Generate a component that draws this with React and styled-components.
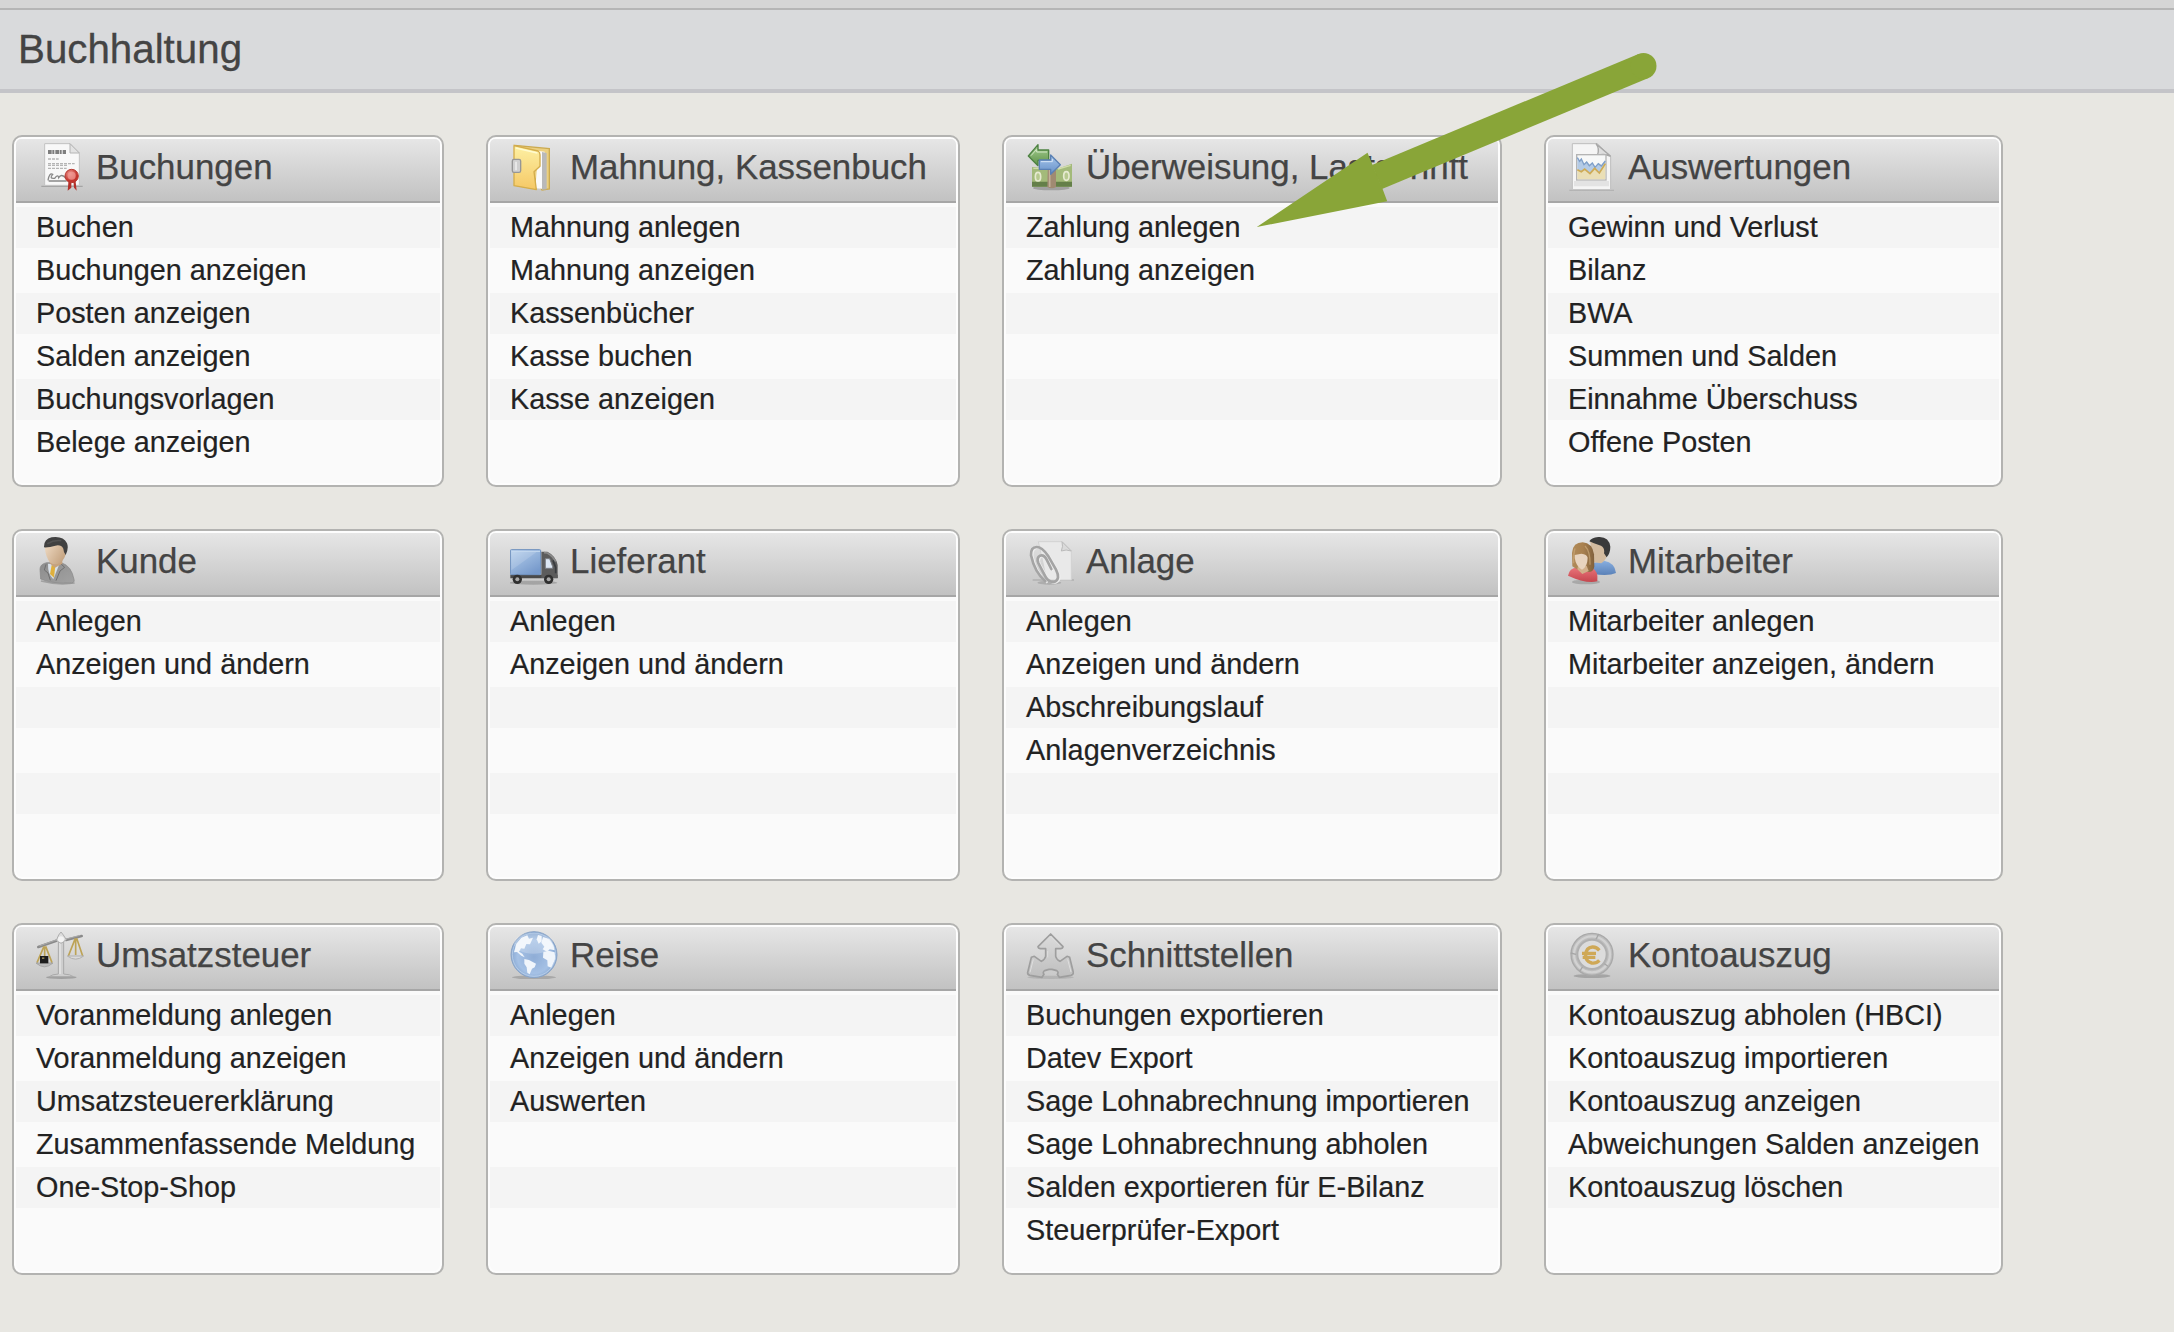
import React from "react";
import styled, { createGlobalStyle } from "styled-components";

const GlobalStyle = createGlobalStyle`
  *, *::before, *::after { box-sizing: border-box; }
  html, body, #root { margin: 0; padding: 0; height: 100%; }
  body {
    background: #e8e7e2;
    font-family: "Liberation Sans", Arial, Helvetica, sans-serif;
    overflow: hidden;
  }
`;

const Page = styled.div`
  position: relative;
  min-height: 1332px;
  display: flex;
  flex-direction: column;
`;

const TopStrip = styled.div`
  height: 10px;
  background: #d5d5d5;
  border-bottom: 2px solid #b5b5b5;
`;

const TitleBar = styled.header`
  height: 83px;
  padding: 1px 18px 0;
  background: #d9dadc;
  border-bottom: 4px solid #c4c4c8;
`;

const PageTitle = styled.h1`
  margin: 0;
  font-size: 40.3px;
  font-weight: 400;
  line-height: 78px;
  color: #444;
  -webkit-text-stroke: 0.3px #444;
`;

const CardGrid = styled.main`
  display: grid;
  grid-template-columns: 432px 474px 500px 459px;
  grid-auto-rows: 352px;
  gap: 42px;
  padding: 42px 12px;
`;

const Card = styled.section`
  padding: 2px;
  background: #fafafa;
  border: 2px solid #b3b3b1;
  border-radius: 10px;
  box-shadow: inset 0 0 0 2px #fdfdfd;
`;

const CardHeader = styled.div`
  display: flex;
  align-items: flex-start;
  gap: 12px;
  height: 64px;
  padding: 4px 20px 0;
  border-bottom: 2px solid #a6a6a6;
  border-radius: 5px 5px 0 0;
  background: linear-gradient(#e6e6e6, #c2c2c2);
`;

const CardTitle = styled.h2`
  margin: 0;
  font-size: 34.9px;
  font-weight: 400;
  line-height: 48px;
  white-space: nowrap;
  color: #444;
  -webkit-text-stroke: 0.25px #444;
`;

const IconSvg = styled.svg`
  flex: none;
  width: 48px;
  height: 48px;
  filter: blur(0.6px);
`;

const LinkList = styled.ul`
  list-style: none;
  margin: 4px 0 0;
  padding: 0;
`;

const LinkRow = styled.li`
  height: 43px;
  padding: 0 20px;
  border-bottom: 2px solid #fafafa;
  background: ${(p) => (p.$striped ? "#f4f4f4" : "#fafafa")};
  font-size: 28.8px;
  line-height: 40px;
  white-space: nowrap;
  color: #222;
  -webkit-text-stroke: 0.2px #222;
`;

const Pointer = styled.svg`
  position: absolute;
  left: 1250px;
  top: 45px;
  width: 415px;
  height: 190px;
  pointer-events: none;
`;

const Icon = ({ children }) => (
  <IconSvg viewBox="0 0 144 144" aria-hidden="true">{children}</IconSvg>
);

const CertificateIcon = () => (
  <Icon>
    <defs>
      <radialGradient id="seal" cx=".4" cy=".35">
        <stop offset="0" stopColor="#f4a49e" />
        <stop offset="1" stopColor="#c3342d" />
      </radialGradient>
    </defs>
    <path d="M16 130H140" stroke="#9b9b9b" strokeWidth="4" opacity=".8" />
    <path d="M26 2H102L130 30V127H26Z" fill="#f8f8f8" stroke="#c2c2c2" strokeWidth="3" />
    <path d="M102 2V30H130Z" fill="#e3e3e3" stroke="#b4b4b4" strokeWidth="3" />
    <path d="M36 24H90M36 30H90" stroke="#555" strokeWidth="5" strokeDasharray="11 2 6 3" />
    <path d="M36 48H68M36 62H116M36 67H94M36 76H92" stroke="#b5b5b5" strokeWidth="4" strokeDasharray="9 3" />
    <path d="M36 112Q40 88 50 94Q38 108 56 106Q66 92 68 104Q76 90 90 106M38 114H92" fill="none" stroke="#888" strokeWidth="4" />
    <path d="M98 108L95 143L106 134V114ZM112 112L114 134L122 143L118 108Z" fill="#b3312b" />
    <circle cx="107" cy="99" r="20" fill="url(#seal)" stroke="#b83a32" strokeWidth="3" />
    <circle cx="107" cy="98" r="12" fill="#ef9690" opacity=".75" />
  </Icon>
);

const FolderIcon = () => (
  <Icon>
    <defs>
      <linearGradient id="folder" x2="0" y2="1">
        <stop offset="0" stopColor="#fdf0a3" />
        <stop offset="1" stopColor="#f5c866" />
      </linearGradient>
    </defs>
    <path d="M14 7L118 17V138L96 141Z" fill="#ecd080" stroke="#cbaa50" strokeWidth="4" />
    <path d="M85 24L104 26V138L76 136Z" fill="#fafafa" />
    <path d="M96 27L110 30V139L96 140Z" fill="#b9b9b9" />
    <path d="M12 8L84 24Q90 27 90 35V70L72 86L79 140L12 128Z" fill="url(#folder)" stroke="#d4ad4b" strokeWidth="4" strokeLinejoin="round" />
    <path d="M17 15L82 30" stroke="#fffbd0" strokeWidth="4" />
    <rect x="7" y="49" width="25" height="39" rx="5" fill="#d0d0d0" stroke="#969696" strokeWidth="4" />
    <path d="M18 56V82" stroke="#f4f4f4" strokeWidth="4" />
  </Icon>
);

const TransferIcon = () => (
  <Icon>
    <defs>
      <linearGradient id="green" x2="0" y2="1">
        <stop offset="0" stopColor="#a9cf94" />
        <stop offset="1" stopColor="#5c9248" />
      </linearGradient>
      <linearGradient id="blueArrow" x2="0" y2="1">
        <stop offset="0" stopColor="#a5c5ea" />
        <stop offset="1" stopColor="#6690c8" />
      </linearGradient>
    </defs>
    <ellipse cx="76" cy="135" rx="55" ry="7" fill="#777" opacity=".5" />
    <path d="M18 72L92 78L138 62V131H18Z" fill="#a3ba7a" />
    <path d="M18 116H138V131H18Z" fill="#647f49" />
    <path d="M22 76H60M96 78L134 67" stroke="#d0dcaa" strokeWidth="4" />
    <ellipse cx="36" cy="101" rx="8" ry="13" fill="#b7c98f" stroke="#e6ead0" strokeWidth="5" />
    <ellipse cx="121" cy="99" rx="8" ry="13" fill="#b7c98f" stroke="#e6ead0" strokeWidth="5" />
    <path d="M66 48H90V132Q78 140 64 132Z" fill="#a08a72" />
    <path d="M71 50V132" stroke="#c3b19a" strokeWidth="5" />
    <path d="M7 39L36 5V21H68V52H36V68Z" fill="url(#green)" stroke="#4d8242" strokeWidth="4" strokeLinejoin="round" />
    <path d="M15 38L32 19V27H63" fill="none" stroke="#d2e8c5" strokeWidth="3" />
    <path d="M103 65L74 36V51H40V79H74V94Z" fill="url(#blueArrow)" stroke="#5a80b4" strokeWidth="4" strokeLinejoin="round" />
    <path d="M45 56H79V48" fill="none" stroke="#d7e6f7" strokeWidth="3" />
  </Icon>
);

const ReportIcon = () => (
  <Icon>
    <path d="M4 142H138" stroke="#aaa" strokeWidth="4" opacity=".7" />
    <path d="M13 2H88L128 40V140H13Z" fill="#f5f5f5" stroke="#bebebe" strokeWidth="3" />
    <path d="M18 114H123V130H18Z" fill="#e3e3e3" />
    <path d="M84 2Q96 18 88 38Q108 30 128 40Z" fill="#dedede" stroke="#a7a7a7" strokeWidth="4" />
    <rect x="26" y="35" width="88" height="76" fill="#f7f8f8" stroke="#b4b4b4" strokeWidth="4" />
    <path d="M28 42L35 53L40 46L48 63L56 55L64 66L73 58L81 71L91 60L100 67L112 52V73L95 89L82 77L67 91L50 78L40 85L28 80Z" fill="#b4cbe6" />
    <path d="M28 44L35 55L40 48L48 65L56 57L64 68L73 60L81 73L91 62L100 69L112 54" fill="none" stroke="#7f9fc8" strokeWidth="4" />
    <path d="M28 80L40 86L50 78L66 92L80 76L94 90L112 62V109H28Z" fill="#eadfb6" />
    <path d="M28 80L40 86L50 78L66 92L80 76L94 90L112 62" fill="none" stroke="#ceab55" strokeWidth="5" />
  </Icon>
);

const CustomerIcon = () => (
  <Icon>
    <defs>
      <linearGradient id="suit" x2="1" y2="1">
        <stop offset="0" stopColor="#8c8c8c" />
        <stop offset="1" stopColor="#a2a2a2" />
      </linearGradient>
      <linearGradient id="skin" x2="1" y2=".6">
        <stop offset="0" stopColor="#f0dcc5" />
        <stop offset="1" stopColor="#c4a27f" />
      </linearGradient>
    </defs>
    <path d="M15 132Q65 145 116 138" fill="none" stroke="#777" strokeWidth="5" opacity=".5" />
    <path d="M12 97Q12 81 32 77L78 78Q106 87 114 127Q118 139 100 138Q46 140 14 126Z" fill="url(#suit)" stroke="#858585" strokeWidth="2" />
    <path d="M36 80L70 82L52 127Q35 111 36 80Z" fill="#d9e1e9" />
    <path d="M47 84L58 87L54 122L42 111Z" fill="#dfb03c" />
    <path d="M73 79L86 91L72 102L60 131M30 82L25 99L36 108L43 130" fill="none" stroke="#6f6f6f" strokeWidth="3" />
    <path d="M40 62H79V80L57 92L42 80Z" fill="#c5a27e" />
    <path d="M26 29Q39 25 49 20Q83 20 91 41Q88 68 70 79Q57 86 43 77Q29 62 26 29Z" fill="url(#skin)" />
    <path d="M24 31Q23 6 47 1Q82 -4 93 19Q99 34 89 54Q83 47 82 35Q75 22 58 26Q39 32 24 31Z" fill="#414141" />
    <path d="M34 20Q54 8 76 11" fill="none" stroke="#656565" strokeWidth="5" opacity=".5" />
  </Icon>
);

const TruckIcon = () => (
  <Icon>
    <defs>
      <linearGradient id="box" x1="0" y1="0" x2=".7" y2="1">
        <stop offset="0" stopColor="#b9d2ed" />
        <stop offset=".45" stopColor="#9ab8de" />
        <stop offset="1" stopColor="#7699cb" />
      </linearGradient>
    </defs>
    <ellipse cx="70" cy="137" rx="72" ry="6" fill="#777" opacity=".45" />
    <path d="M1 113H143V124H1Z" fill="#4a4a4a" />
    <path d="M94 44H112Q137 56 143 84V123H94Z" fill="#5c5c5c" />
    <path d="M102 47L112 48Q130 59 137 74" fill="none" stroke="#8b8b8b" strokeWidth="5" />
    <path d="M106 65H119L128 89V94H106Z" fill="#dde7f3" stroke="#7b7f86" strokeWidth="3" />
    <path d="M129 70L137 91V109" fill="none" stroke="#383b3f" strokeWidth="5" />
    <rect x="1" y="38" width="91" height="75" rx="3" fill="url(#box)" stroke="#6c8fbd" strokeWidth="3" />
    <path d="M4 43H90" stroke="#c8dbf0" strokeWidth="3" />
    <path d="M4 45H80L4 100Z" fill="#fff" opacity=".15" />
    <circle cx="22" cy="127" r="14" fill="#303030" /><circle cx="22" cy="127" r="6" fill="#a8a8a8" />
    <circle cx="116" cy="127" r="14" fill="#303030" /><circle cx="116" cy="127" r="6" fill="#a8a8a8" />
  </Icon>
);

const AttachmentIcon = () => (
  <Icon>
    <path d="M20 129H144" stroke="#999" strokeWidth="4" opacity=".5" />
    <path d="M37 14H108L136 42V129H62Z" fill="#e9e9e9" stroke="#d2d2d2" strokeWidth="3" />
    <path d="M108 14Q112 28 106 42Q120 36 136 42Z" fill="#dadada" stroke="#bababa" strokeWidth="3" />
    <ellipse cx="70" cy="137" rx="36" ry="6" fill="#777" opacity=".35" />
    <path d="M58 133Q26 106 15 55Q14 30 32 30Q48 30 66 56L90 98Q104 126 86 134Q72 138 60 122L37 78Q31 62 42 56Q54 52 62 68L76 96" transform="translate(4 2)" fill="none" stroke="#efefef" strokeWidth="7" strokeLinecap="round" />
    <path d="M58 133Q26 106 15 55Q14 30 32 30Q48 30 66 56L90 98Q104 126 86 134Q72 138 60 122L37 78Q31 62 42 56Q54 52 62 68L76 96" fill="none" stroke="#a4a4a4" strokeWidth="8" strokeLinecap="round" />
  </Icon>
);

const EmployeesIcon = () => (
  <Icon>
    <defs>
      <linearGradient id="shirtBlue" x2="0" y2="1"><stop stopColor="#89afe0" /><stop offset="1" stopColor="#5a81b8" /></linearGradient>
      <linearGradient id="shirtRed" x2="0" y2="1"><stop stopColor="#ea757a" /><stop offset="1" stopColor="#c5464e" /></linearGradient>
      <linearGradient id="hair" x2="1" y2="0"><stop stopColor="#b08a58" /><stop offset=".5" stopColor="#a98150" /><stop offset="1" stopColor="#80603c" /></linearGradient>
    </defs>
    <ellipse cx="54" cy="135" rx="42" ry="7" fill="#777" opacity=".4" />
    <path d="M74 78L108 71Q141 77 144 108Q122 118 76 111Z" fill="url(#shirtBlue)" />
    <path d="M66 13Q80 1 104 3Q120 7 121 36Q119 67 100 79L77 76Z" fill="#d3bb9f" />
    <path d="M64 13Q69 2 91 0Q123 -1 127 29Q127 48 116 61L108 49Q111 32 99 26L78 19Z" fill="#3a3a3a" />
    <path d="M0 116Q4 94 27 91L71 93Q92 101 88 133Q55 141 0 116Z" fill="url(#shirtRed)" />
    <path d="M12 47Q15 16 44 16Q73 18 78 52L79 89Q76 105 62 105Q33 104 13 88Z" fill="url(#hair)" />
    <path d="M30 86H56L62 102L43 111L28 97Z" fill="#d2b08b" />
    <path d="M20 54L40 50Q57 51 59 62Q58 90 42 98Q24 88 20 63Z" fill="#e8d4bf" />
    <path d="M51 27Q67 43 66 83M21 34Q16 50 17 79" fill="none" stroke="#caa877" strokeWidth="4" opacity=".7" />
  </Icon>
);

const ScalesIcon = () => (
  <Icon>
    <ellipse cx="76" cy="139" rx="46" ry="5" fill="#777" opacity=".5" />
    <path d="M40 137Q48 130 67 129V30H83V129Q104 130 112 137Z" fill="#cecece" stroke="#a9a9a9" strokeWidth="3" />
    <path d="M72 32V129" stroke="#e6e6e6" strokeWidth="4" />
    <path d="M7 48L61 29M90 27L137 15" stroke="#8a8a8a" strokeWidth="8" strokeLinecap="round" />
    <path d="M10 45L61 27M90 24L133 13" stroke="#aaa" strokeWidth="3" />
    <path d="M61 28L68 12L75 3L82 12L91 26L75 37Z" fill="#ddd" stroke="#adadad" strokeWidth="3" />
    <circle cx="75" cy="25" r="9" fill="#f3f3f3" />
    <path d="M24 46L3 95M26 46L26 91M29 46L48 95M118 22L97 75M119 22V72M122 22L140 75" fill="none" stroke="#bda356" strokeWidth="5" />
    <path d="M0 96Q25 119 51 96Z" fill="#bbb" stroke="#999" strokeWidth="2" />
    <path d="M94 75Q119 94 143 75Z" fill="#dadada" stroke="#b0b0b0" strokeWidth="3" />
    <path d="M12 75H37V97H12Z" fill="#1d1d1d" /><path d="M18 79H25V84H18Z" fill="#8d8053" />
  </Icon>
);

const GlobeIcon = () => (
  <Icon>
    <defs>
      <radialGradient id="sea" cx=".5" cy=".55" r=".55">
        <stop offset="0" stopColor="#8fadd6" />
        <stop offset=".65" stopColor="#a5c1e5" />
        <stop offset="1" stopColor="#7d9fcb" />
      </radialGradient>
      <filter id="soft"><feGaussianBlur stdDeviation="2" /></filter>
    </defs>
    <ellipse cx="72" cy="139" rx="66" ry="6" fill="#777" opacity=".4" />
    <circle cx="72" cy="71" r="69" fill="url(#sea)" stroke="#8aa4c6" strokeWidth="3" />
    <g fill="#f0f5fb" filter="url(#soft)">
      <path d="M34 20L52 13L57 23L69 20L60 40L49 39L43 53L33 52L27 62L37 68L44 79L34 74L21 63L12 64L19 38Z" />
      <path d="M84 12L95 15L95 31L86 38L80 25Z" />
      <path d="M99 18L119 24L131 43L134 58L119 55L111 62L98 55L103 47L94 35Z" />
      <path d="M100 63L115 59L134 64L136 84L124 110L113 106L112 88L99 80Z" />
      <path d="M43 84L57 87L78 98L74 109L66 113L59 130L52 125L50 109L43 98Z" />
    </g>
    <ellipse cx="70" cy="37" rx="58" ry="31" fill="#fff" opacity=".22" />
    <circle cx="72" cy="71" r="65" fill="none" stroke="#c8daf0" strokeWidth="3" opacity=".6" />
  </Icon>
);

const InterfacesIcon = () => (
  <Icon>
    <defs><linearGradient id="fork" x2="0" y2="1"><stop stopColor="#dcdcdc" /><stop offset="1" stopColor="#bebebe" /></linearGradient></defs>
    <ellipse cx="74" cy="139" rx="70" ry="5" fill="#777" opacity=".25" />
    <path d="M74 9L111 47Q110 54 101 53H89V76Q91 85 102 91L123 76L131 79L142 124Q143 131 135 133L100 139L94 130Q99 124 92 119L78 115H69L56 119Q49 124 54 130L48 139L12 133Q4 131 5 124L16 79L25 76L46 91Q57 85 59 76V53H46Q37 54 36 47Z" fill="url(#fork)" stroke="#9e9e9e" strokeWidth="5" strokeLinejoin="round" />
    <path d="M74 17L101 44M22 85L12 124M125 85L135 123M65 60V79" fill="none" stroke="#dedede" strokeWidth="3" />
  </Icon>
);

const CoinIcon = () => (
  <Icon>
    <ellipse cx="72" cy="135" rx="55" ry="6" fill="#777" opacity=".45" />
    <circle cx="72" cy="70" r="63" fill="#bdbdbd" stroke="#a9a9a9" strokeWidth="4" />
    <circle cx="72" cy="70" r="54" fill="none" stroke="#d2d2d2" strokeWidth="7" />
    <path d="M92 9L84 25M8 66L24 70M35 121L44 107M120 106L105 95" stroke="#a6a6a6" strokeWidth="4" />
    <circle cx="72" cy="70" r="44" fill="#dcdcdc" stroke="#b0b0b0" strokeWidth="6" />
    <path d="M94 58Q85 47 73 48Q54 50 53 72Q53 92 71 96Q85 98 94 88M42 67H84M44 79H82" fill="none" stroke="#cfa856" strokeWidth="10" />
  </Icon>
);

const cards = [
  { title: "Buchungen", icon: CertificateIcon, links: ["Buchen", "Buchungen anzeigen", "Posten anzeigen", "Salden anzeigen", "Buchungsvorlagen", "Belege anzeigen"] },
  { title: "Mahnung, Kassenbuch", icon: FolderIcon, links: ["Mahnung anlegen", "Mahnung anzeigen", "Kassenbücher", "Kasse buchen", "Kasse anzeigen"] },
  { title: "Überweisung, Lastschrift", icon: TransferIcon, links: ["Zahlung anlegen", "Zahlung anzeigen"] },
  { title: "Auswertungen", icon: ReportIcon, links: ["Gewinn und Verlust", "Bilanz", "BWA", "Summen und Salden", "Einnahme Überschuss", "Offene Posten"] },
  { title: "Kunde", icon: CustomerIcon, links: ["Anlegen", "Anzeigen und ändern"] },
  { title: "Lieferant", icon: TruckIcon, links: ["Anlegen", "Anzeigen und ändern"] },
  { title: "Anlage", icon: AttachmentIcon, links: ["Anlegen", "Anzeigen und ändern", "Abschreibungslauf", "Anlagenverzeichnis"] },
  { title: "Mitarbeiter", icon: EmployeesIcon, links: ["Mitarbeiter anlegen", "Mitarbeiter anzeigen, ändern"] },
  { title: "Umsatzsteuer", icon: ScalesIcon, links: ["Voranmeldung anlegen", "Voranmeldung anzeigen", "Umsatzsteuererklärung", "Zusammenfassende Meldung", "One-Stop-Shop"] },
  { title: "Reise", icon: GlobeIcon, links: ["Anlegen", "Anzeigen und ändern", "Auswerten"] },
  { title: "Schnittstellen", icon: InterfacesIcon, links: ["Buchungen exportieren", "Datev Export", "Sage Lohnabrechnung importieren", "Sage Lohnabrechnung abholen", "Salden exportieren für E-Bilanz", "Steuerprüfer-Export"] },
  { title: "Kontoauszug", icon: CoinIcon, links: ["Kontoauszug abholen (HBCI)", "Kontoauszug importieren", "Kontoauszug anzeigen", "Abweichungen Salden anzeigen", "Kontoauszug löschen"] },
];

const ROWS_PER_CARD = 6;

function MenuCard({ title, icon: CardIcon, links }) {
  return (
    <Card>
      <CardHeader>
        <CardIcon />
        <CardTitle>{title}</CardTitle>
      </CardHeader>
      <LinkList>
        {Array.from({ length: ROWS_PER_CARD }, (_, i) => (
          <LinkRow key={i} $striped={i % 2 === 0}>{links[i]}</LinkRow>
        ))}
      </LinkList>
    </Card>
  );
}

export default function App() {
  return (
    <Page>
      <GlobalStyle />
      <TopStrip />
      <TitleBar><PageTitle>Buchhaltung</PageTitle></TitleBar>
      <CardGrid>
        {cards.map((card) => <MenuCard key={card.title} {...card} />)}
      </CardGrid>
      <Pointer viewBox="1250 45 415 190" aria-hidden="true">
        <path d="M1377 177L1643.5 66" stroke="#89a538" strokeWidth="26" strokeLinecap="butt" />
        <circle cx="1643.5" cy="66" r="13" fill="#89a538" />
        <path d="M1256.8 227L1367.5 152.7L1373 166L1382.7 189.3L1387.2 201.3Z" fill="#89a538" />
      </Pointer>
    </Page>
  );
}
